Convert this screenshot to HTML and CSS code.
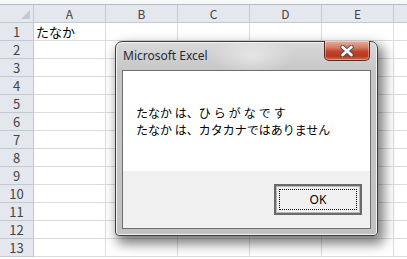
FILE: index.html
```html
<!DOCTYPE html>
<html lang="ja">
<head>
    <meta charset="UTF-8">
    <title>Microsoft Excel</title>
    <link rel="stylesheet" href="styles.css">
</head>
<body>
    <div class="sheet">
        <div class="ribbon-edge"></div>
        <div class="grid">
            <div class="corner"><span class="corner-mark"></span></div>
            <div class="col-head">A</div>
            <div class="col-head">B</div>
            <div class="col-head">C</div>
            <div class="col-head">D</div>
            <div class="col-head">E</div>
            <div class="col-head last"></div>

            <div class="row-head">1</div><div class="cell">たなか</div><div class="cell"></div><div class="cell"></div><div class="cell"></div><div class="cell"></div><div class="cell last"></div>
            <div class="row-head">2</div><div class="cell"></div><div class="cell"></div><div class="cell"></div><div class="cell"></div><div class="cell"></div><div class="cell last"></div>
            <div class="row-head">3</div><div class="cell"></div><div class="cell"></div><div class="cell"></div><div class="cell"></div><div class="cell"></div><div class="cell last"></div>
            <div class="row-head">4</div><div class="cell"></div><div class="cell"></div><div class="cell"></div><div class="cell"></div><div class="cell"></div><div class="cell last"></div>
            <div class="row-head">5</div><div class="cell"></div><div class="cell"></div><div class="cell"></div><div class="cell"></div><div class="cell"></div><div class="cell last"></div>
            <div class="row-head">6</div><div class="cell"></div><div class="cell"></div><div class="cell"></div><div class="cell"></div><div class="cell"></div><div class="cell last"></div>
            <div class="row-head">7</div><div class="cell"></div><div class="cell"></div><div class="cell"></div><div class="cell"></div><div class="cell"></div><div class="cell last"></div>
            <div class="row-head">8</div><div class="cell"></div><div class="cell"></div><div class="cell"></div><div class="cell"></div><div class="cell"></div><div class="cell last"></div>
            <div class="row-head">9</div><div class="cell"></div><div class="cell"></div><div class="cell"></div><div class="cell"></div><div class="cell"></div><div class="cell last"></div>
            <div class="row-head">10</div><div class="cell"></div><div class="cell"></div><div class="cell"></div><div class="cell"></div><div class="cell"></div><div class="cell last"></div>
            <div class="row-head">11</div><div class="cell"></div><div class="cell"></div><div class="cell"></div><div class="cell"></div><div class="cell"></div><div class="cell last"></div>
            <div class="row-head">12</div><div class="cell"></div><div class="cell"></div><div class="cell"></div><div class="cell"></div><div class="cell"></div><div class="cell last"></div>
            <div class="row-head">13</div><div class="cell"></div><div class="cell"></div><div class="cell"></div><div class="cell"></div><div class="cell"></div><div class="cell last"></div>
        </div>
    </div>

    <div class="dialog">
        <div class="titlebar">
            <span class="title">Microsoft Excel</span>
            <button class="close-button" aria-label="閉じる">
                <svg width="18" height="12" viewBox="0 0 18 12">
                    <path d="M4.5 2 L13.5 10 M13.5 2 L4.5 10" stroke="#505050" stroke-width="4.5" stroke-linecap="round"/>
                    <path d="M4.5 2 L13.5 10 M13.5 2 L4.5 10" stroke="#ffffff" stroke-width="2.6" stroke-linecap="round"/>
                </svg>
            </button>
        </div>
        <div class="client">
            <div class="message">
                <div>たなか は、<span class="wide">ひらがなです</span></div>
                <div>たなか は、カタカナではありません</div>
            </div>
            <div class="actions">
                <button class="ok-button"><span class="focus">OK</span></button>
            </div>
        </div>
    </div>
</body>
</html>
```

FILE: styles.css
```css
* {
    box-sizing: border-box;
}
body {
    margin: 0;
    background-color: #ffffff;
    font-family: "Noto Sans CJK JP", "DejaVu Sans", sans-serif;
    overflow: hidden;
}
.ribbon-edge {
    height: 5px;
    background-color: #f6f7f9;
    border-bottom: 1px solid #b6bcc6;
}
.grid {
    display: grid;
    grid-template-columns: 34px 72px 72px 72px 72px 72px 1fr;
    grid-auto-rows: 18px;
}
.corner,
.col-head,
.row-head {
    background-color: #e4e8ee;
    color: #444;
    font-size: 12px;
    display: flex;
    align-items: center;
    justify-content: center;
    border-right: 1px solid #c2c9d3;
    border-bottom: 1px solid #c2c9d3;
}
.corner {
    justify-content: flex-end;
    align-items: flex-end;
    padding: 0 3px 3px 0;
}
.corner-mark {
    width: 0;
    height: 0;
    border-left: 9px solid transparent;
    border-bottom: 9px solid #c4c9d0;
}
.row-head {
    font-size: 13px;
}
.col-head.last {
    border-right: none;
}
.cell {
    border-right: 1px solid #dadcdd;
    border-bottom: 1px solid #dadcdd;
    font-size: 13px;
    color: #000;
    padding-left: 2px;
    line-height: 17px;
    white-space: nowrap;
}
.cell.last {
    border-right: none;
}

.dialog {
    position: absolute;
    left: 115px;
    top: 41px;
    width: 263px;
    height: 195px;
    padding: 0 6px 6px 6px;
    border: 1px solid #3c3c3c;
    border-radius: 7px 7px 4px 4px;
    background: linear-gradient(to bottom, #d9d9d9 0px, #c6c6c6 30px, #c2c2c2 100%);
    box-shadow: inset 0 0 0 1px #f2f2f2, 4px 6px 12px 2px rgba(0, 0, 0, 0.5);
    display: flex;
    flex-direction: column;
}
.titlebar {
    height: 28px;
    display: flex;
    align-items: flex-start;
    background: radial-gradient(ellipse 40px 20px at 130px 14px, rgba(255, 255, 255, 0.45), rgba(255, 255, 255, 0));
}
.title {
    font-family: "Noto Sans", "DejaVu Sans", sans-serif;
    font-size: 12px;
    color: #1e2a3a;
    margin-top: 5px;
    padding-left: 1px;
}
.close-button {
    margin-left: auto;
    margin-right: 1px;
    width: 46px;
    height: 20px;
    margin-top: -1px;
    padding: 0;
    border: 1px solid #5a2a20;
    border-top: none;
    border-radius: 0 0 5px 5px;
    background: linear-gradient(to bottom, #e6b1a2 0%, #d47b63 35%, #c2432b 55%, #b8391f 80%, #d36a4f 100%);
    box-shadow: inset 0 0 0 1px rgba(255, 255, 255, 0.35);
    display: flex;
    align-items: center;
    justify-content: center;
}
.client {
    flex: 1;
    border: 1px solid #6e6e6e;
    background-color: #f0f0f0;
    display: flex;
    flex-direction: column;
}
.message {
    height: 100px;
    background-color: #ffffff;
    padding: 33px 0 0 13px;
    font-size: 12px;
    line-height: 17px;
    color: #000;
}
.wide {
    letter-spacing: 3px;
}
.actions {
    flex: 1;
    display: flex;
    justify-content: flex-end;
    align-items: flex-start;
    padding: 13px 8px 0 0;
}
.ok-button {
    width: 88px;
    height: 31px;
    padding: 3px;
    border: 2px solid #6a6a6a;
    background-color: #f0f0f0;
    box-shadow: inset 0 0 0 1px #b9b9b9;
    font-family: "Noto Sans", "DejaVu Sans", sans-serif;
    font-size: 12px;
    color: #000;
}
.focus {
    display: flex;
    align-items: center;
    justify-content: center;
    height: 100%;
    border: 1px dotted #000;
}
```
